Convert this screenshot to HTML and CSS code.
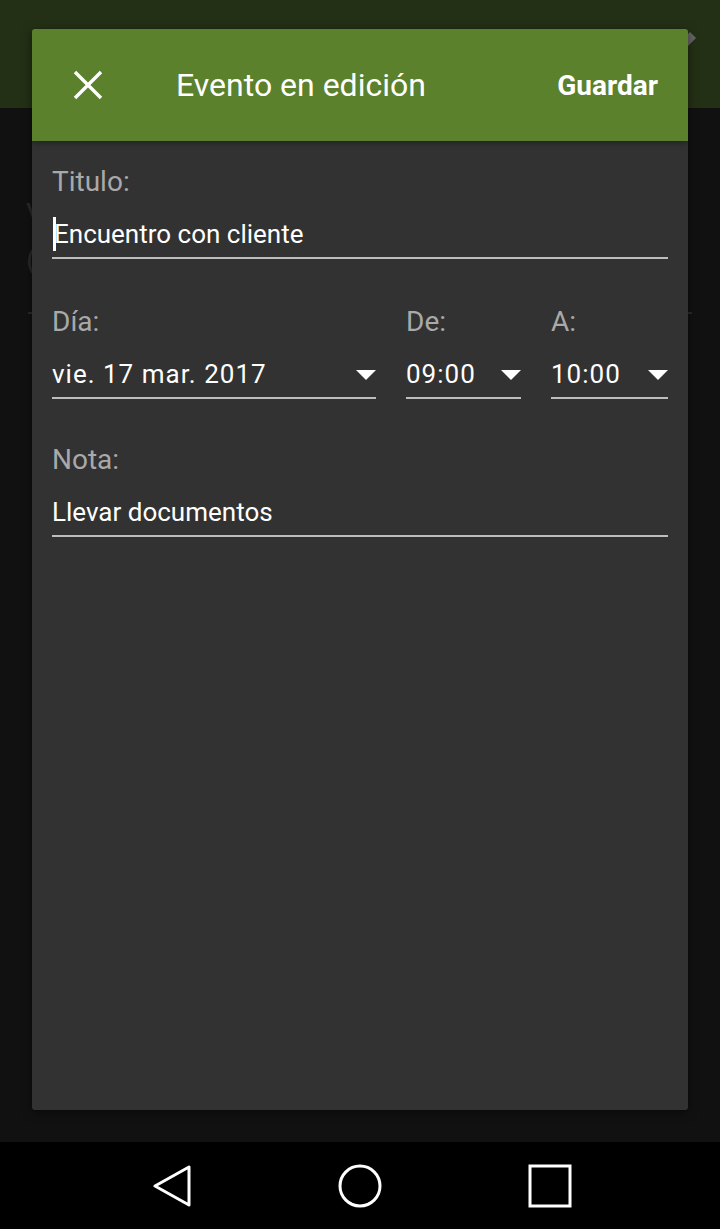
FILE: index.html
```html
<!DOCTYPE html>
<html lang="es">
<head>
<meta charset="utf-8">
<title>Evento en edición</title>
<link rel="stylesheet" href="styles.css">
</head>
<body>
<div class="screen">
  <div class="appbar">
    <svg class="pencil" width="24" height="24" viewBox="0 0 24 24"><path d="M6 12 L14 4 L20 10 L12 18 Z" fill="#666"/></svg>
  </div>
  <div class="backdrop">
    <div class="ghost ghost-a">V</div>
    <div class="ghost ghost-b">(</div>
    <div class="ghost-line"></div>
  </div>
  <div class="dialog">
    <header class="dlg-head">
      <svg class="close" width="30" height="30" viewBox="0 0 30 30"><path d="M2 2 L28 28 M28 2 L2 28" stroke="#fff" stroke-width="3.4" stroke-linecap="butt"/></svg>
      <h1 class="dlg-title">Evento en edición</h1>
      <span class="save">Guardar</span>
    </header>
    <div class="dlg-body">
      <div class="field">
        <div class="label">Titulo:</div>
        <div class="input"><span class="caret"></span>Encuentro con cliente</div>
      </div>
      <div class="row">
        <div class="field f-day">
          <div class="label">Día:</div>
          <div class="input select"><span class="val">vie. 17 mar. 2017</span><span class="tri"></span></div>
        </div>
        <div class="field f-from">
          <div class="label">De:</div>
          <div class="input select"><span class="val">09:00</span><span class="tri"></span></div>
        </div>
        <div class="field f-to">
          <div class="label">A:</div>
          <div class="input select"><span class="val">10:00</span><span class="tri"></span></div>
        </div>
      </div>
      <div class="field">
        <div class="label">Nota:</div>
        <div class="input">Llevar documentos</div>
      </div>
    </div>
  </div>
  <nav class="navbar">
    <svg class="nav-ico" width="40" height="42" viewBox="0 0 40 42"><path d="M37 2 L37 40 L3 21 Z" fill="none" stroke="#fff" stroke-width="3" stroke-linejoin="round"/></svg>
    <svg class="nav-ico" width="44" height="44" viewBox="0 0 44 44"><circle cx="22" cy="22" r="20" fill="none" stroke="#fff" stroke-width="3"/></svg>
    <svg class="nav-ico" width="44" height="44" viewBox="0 0 44 44"><rect x="2" y="2" width="40" height="40" fill="none" stroke="#fff" stroke-width="3"/></svg>
  </nav>
</div>
</body>
</html>
```

FILE: styles.css
```css
* { box-sizing: border-box; }
html, body { margin: 0; padding: 0; }
body {
  width: 720px;
  height: 1229px;
  overflow: hidden;
  background: #111111;
  font-family: Roboto, "Liberation Sans", sans-serif;
}
.screen {
  position: relative;
  width: 720px;
  height: 1229px;
  display: flex;
  flex-direction: column;
}
.appbar {
  height: 108px;
  background: #243015;
  flex: none;
  position: relative;
}
.pencil {
  position: absolute;
  left: 676px;
  top: 28px;
}
.backdrop {
  flex: 1;
  background: #111111;
  position: relative;
}
.ghost {
  position: absolute;
  color: #2a2a2a;
  font-size: 30px;
}
.ghost-a { left: 26px; top: 88px; }
.ghost-b { left: 26px; top: 134px; }
.ghost-line {
  position: absolute;
  left: 28px;
  right: 28px;
  top: 204px;
  height: 2px;
  background: #2a2a2a;
}
.dialog {
  position: absolute;
  left: 32px;
  top: 29px;
  width: 656px;
  height: 1081px;
  background: #323232;
  border-radius: 3px;
  overflow: hidden;
  box-shadow: 0 2px 10px rgba(0,0,0,0.5);
}
.dlg-head {
  height: 112px;
  background: #5b812d;
  display: flex;
  align-items: center;
  padding: 0 30px 0 41px;
  box-shadow: 0 2px 6px rgba(0,0,0,0.35);
  position: relative;
}
.close { flex: none; }
.dlg-title {
  margin: 0 0 0 73px;
  flex: 1;
  font-size: 32px;
  font-weight: 400;
  color: #fff;
}
.save {
  font-size: 28px;
  font-weight: 700;
  color: #fff;
}
.dlg-body {
  padding: 26px 20px 0 20px;
  display: flex;
  flex-direction: column;
  gap: 46px;
}
.label {
  color: #a9a9a9;
  font-size: 28px;
  line-height: 30px;
  height: 30px;
}
.input {
  position: relative;
  margin-top: 22px;
  color: #fff;
  font-size: 26px;
  line-height: 30px;
  height: 40px;
  padding-bottom: 8px;
  border-bottom: 2px solid #bdbdbd;
  display: flex;
  align-items: center;
}
.caret {
  width: 3px;
  height: 34px;
  background: #fff;
  margin-right: -2px;
  margin-left: 1px;
}
.row {
  display: flex;
  gap: 30px;
  margin-top: 2px;
}
.f-day { width: 324px; }
.f-from { width: 115px; }
.f-to { flex: 1; }
.select { justify-content: space-between; }
.val { letter-spacing: 1px; }
.tri {
  width: 0;
  height: 0;
  border-left: 10px solid transparent;
  border-right: 10px solid transparent;
  border-top: 10px solid #fff;
  margin-top: 2px;
}
.navbar {
  position: absolute;
  left: 0;
  right: 0;
  bottom: 0;
  height: 87px;
  background: #000;
  display: flex;
  align-items: center;
  justify-content: center;
  gap: 146px;
  padding-left: 4px;
}
```
